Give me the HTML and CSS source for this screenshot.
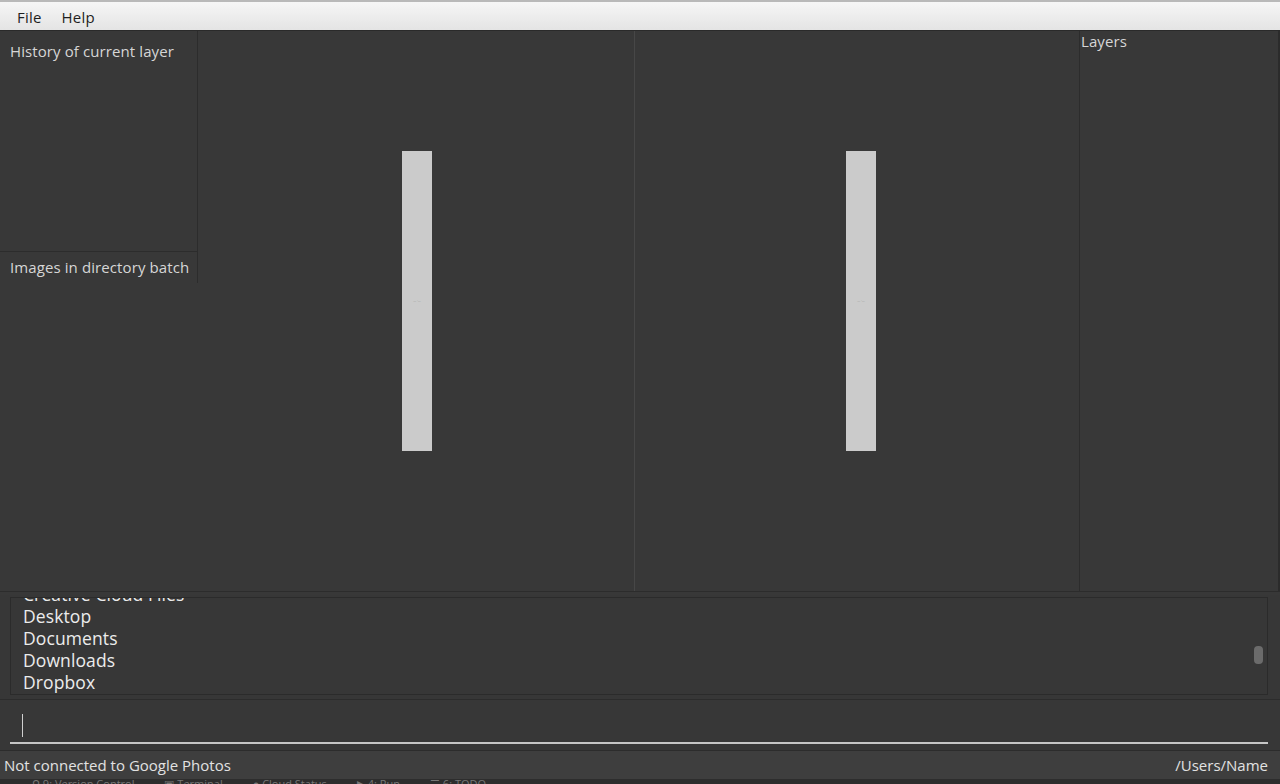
FILE: index.html
```html
<!DOCTYPE html>
<html>
<head>
<meta charset="utf-8">
<link rel="stylesheet" href="styles.css">
</head>
<body>
<div class="app">
  <div class="menubar">
    <span class="menu-item">File</span>
    <span class="menu-item">Help</span>
  </div>
  <div class="main">
    <div class="left">
      <div class="history"><div class="label">History of current layer</div></div>
      <div class="images">
        <div class="images-head"><div class="label">Images in directory batch</div></div>
        <div class="images-body"></div>
      </div>
    </div>
    <div class="canvas canvas-a"><div class="sheet"><span class="tiny">— ·—</span></div></div>
    <div class="canvas canvas-b"><div class="sheet"><span class="tiny">— ·—</span></div></div>
    <div class="right"><div class="label layers">Layers</div></div>
    <div class="edge"></div>
  </div>
  <div class="splitter"></div>
  <div class="files-wrap">
    <div class="files">
      <div class="file-list">
        <div class="file clipped">Creative Cloud Files</div>
        <div class="file">Desktop</div>
        <div class="file">Documents</div>
        <div class="file">Downloads</div>
        <div class="file">Dropbox</div>
      </div>
      <div class="scroll-thumb"></div>
    </div>
  </div>
  <div class="input-wrap">
    <div class="input"><span class="caret"></span></div>
  </div>
  <div class="status">
    <span>Not connected to Google Photos</span>
    <span>/Users/Name</span>
  </div>
  <div class="under">
    <span>⚲ 9: Version Control</span>
    <span>▣ Terminal</span>
    <span>● Cloud Status</span>
    <span>▶ 4: Run</span>
    <span>☰ 6: TODO</span>
  </div>
</div>
</body>
</html>
```
FILE: styles.css
```css
html, body {
  margin: 0;
  padding: 0;
  background: #373737;
}
.app {
  width: 1280px;
  height: 784px;
  display: flex;
  flex-direction: column;
  overflow: hidden;
  font-family: "Open Sans", "Liberation Sans", sans-serif;
}
.menubar {
  flex: none;
  border-top: 2px solid #b9b9b9;
  border-bottom: 1px solid #2a2a2a;
  background: linear-gradient(#f6f6f6, #e4e4e4);
  display: flex;
  align-items: center;
  padding-left: 17px;
  padding-top: 2px;
  box-sizing: content-box;
  height: 26px;
  gap: 20px;
  font-size: 15px;
  letter-spacing: 0.2px;
  color: #1f1f1f;
}
.main {
  height: 560px;
  flex: none;
  display: flex;
  background: #383838;
}
.label {
  color: #d6d6d6;
  font-size: 15px;
  letter-spacing: 0.1px;
  padding-left: 10px;
}
.left {
  width: 198px;
  flex: none;
  display: flex;
  flex-direction: column;
}
.history {
  border-right: 1px solid #2c2c2c;
  border-bottom: 1px solid #2c2c2c;
  padding-top: 10px;
  box-sizing: border-box;
  height: 221px;
}
.images {
  flex: 1;
  display: flex;
  flex-direction: column;
}
.images-head {
  height: 31px;
  border-right: 1px solid #2c2c2c;
  padding-top: 5px;
  box-sizing: border-box;
}
.images-body { flex: 1; }
.canvas {
  display: flex;
  justify-content: center;
  padding-top: 120px;
  box-sizing: border-box;
}
.canvas-a {
  width: 437px;
  flex: none;
  padding-left: 2px;
  border-right: 1px solid #474747;
}
.canvas-b {
  width: 445px;
  flex: none;
  padding-left: 8px;
  border-right: 1px solid #2c2c2c;
}
.sheet {
  width: 30px;
  height: 300px;
  background: #cbcbcb;
  display: flex;
  align-items: center;
  justify-content: center;
}
.tiny {
  font-size: 3px;
  color: #9a9a9a;
}
.right {
  width: 198px;
  flex: none;
}
.layers {
  padding-left: 1px;
  padding-top: 0;
}
.edge {
  flex: 1;
  background: #2b2b2b;
}
.splitter {
  height: 4px;
  flex: none;
  border-top: 1px solid #2c2c2c;
  box-sizing: border-box;
  background: #383838;
}
.files-wrap {
  height: 105px;
  flex: none;
  padding: 2px 12px 5px 10px;
  box-sizing: border-box;
  border-bottom: 1px solid #2c2c2c;
}
.files {
  height: 98px;
  border: 1px solid #2b2b2b;
  box-sizing: border-box;
  position: relative;
  overflow: hidden;
}
.file-list {
  margin-top: -15px;
  padding-left: 12px;
}
.file {
  height: 22px;
  line-height: 22px;
  font-size: 17.5px;
  letter-spacing: 0.1px;
  color: #ececec;
}
.scroll-thumb {
  position: absolute;
  right: 4px;
  top: 48px;
  width: 9px;
  height: 18px;
  border-radius: 4px;
  background: #6b6b6b;
}
.input-wrap {
  height: 51px;
  flex: none;
  padding: 0 12px 0 10px;
  box-sizing: border-box;
  border-bottom: 1px solid #2c2c2c;
}
.input {
  height: 44px;
  border-bottom: 2px solid #c6c6c6;
  box-sizing: border-box;
  display: flex;
  align-items: center;
  padding-left: 12px;
}
.caret {
  width: 1px;
  height: 23px;
  background: #d0d0d0;
  margin-top: 8px;
}
.status {
  height: 28px;
  flex: none;
  background: #3e3e3e;
  display: flex;
  align-items: center;
  justify-content: space-between;
  padding: 0 12px 0 4px;
  font-size: 15px;
  letter-spacing: 0;
  color: #e2e2e2;
}
.under {
  flex: 1;
  background: #2d2d2d;
  display: flex;
  gap: 30px;
  padding-left: 32px;
  font-size: 11px;
  line-height: 10px;
  color: #777;
  overflow: hidden;
}
```
